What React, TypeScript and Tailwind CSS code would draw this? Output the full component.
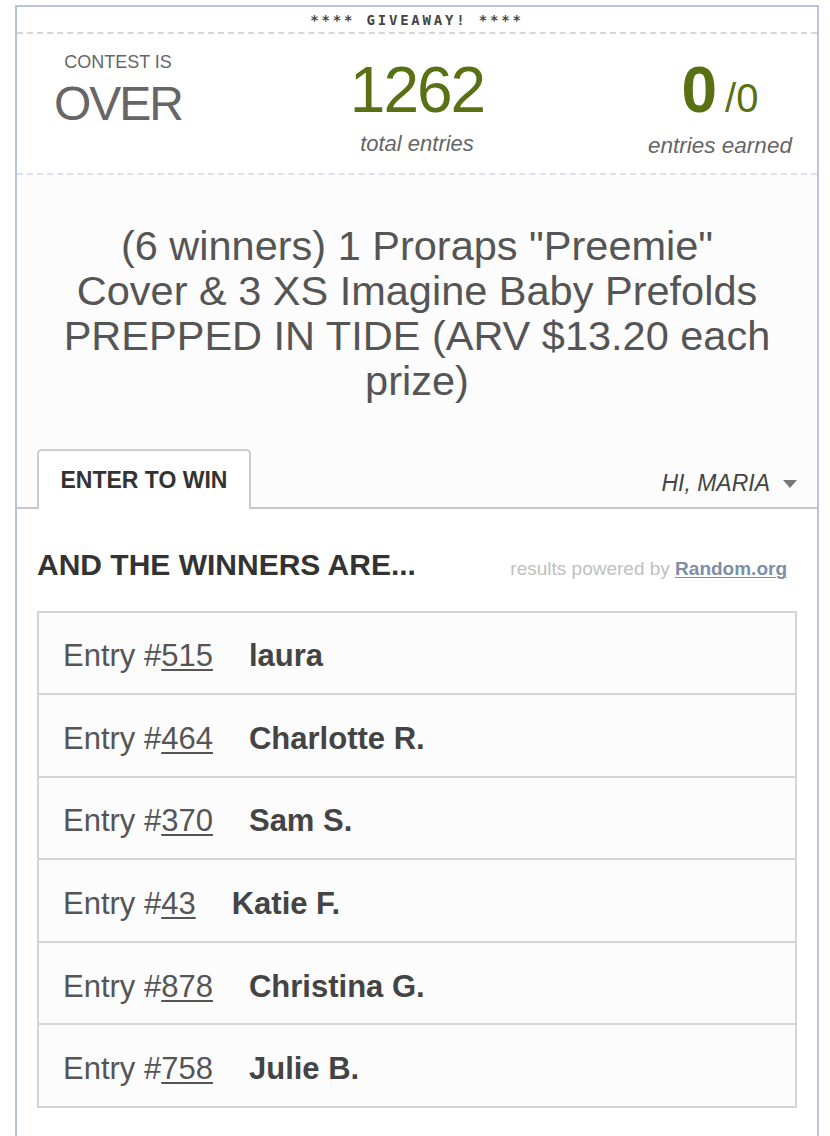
import React from "react";

const winners = [
  { entry: "515", name: "laura" },
  { entry: "464", name: "Charlotte R." },
  { entry: "370", name: "Sam S." },
  { entry: "43", name: "Katie F." },
  { entry: "878", name: "Christina G." },
  { entry: "758", name: "Julie B." },
];

const App = () => {
  return (
    <div
      className="h-[1136px] overflow-hidden bg-white pt-[5px]"
      style={{ fontFamily: '"Liberation Sans", Arial, sans-serif' }}
    >
      <div className="ml-[15px] w-[804px] min-h-[1200px] border-x-2 border-t-2 border-[#b8c4dc] bg-white">
        {/* giveaway banner */}
        <div className="flex h-[27px] items-center justify-center border-b-2 border-dashed border-[#d6d6d6]">
          <span
            className="text-[14px] font-bold leading-none tracking-[2.8px] text-[#444]"
            style={{ fontFamily: '"DejaVu Sans Mono", monospace' }}
          >
            **** GIVEAWAY! ****
          </span>
        </div>

        {/* stats */}
        <div className="grid h-[141px] grid-cols-[202px_396px_1fr] border-b-2 border-dashed border-[#dde0ec]">
          <div className="flex flex-col items-center pt-[18px] text-[#666]">
            <div className="text-[18px] leading-[20px]">CONTEST IS</div>
            <div className="mt-[8px] text-[48px] leading-[48px] tracking-[-2px]">OVER</div>
          </div>
          <div className="flex flex-col items-center pt-[24px]">
            <div className="text-[64px] leading-[64px] tracking-[-2px] text-[#5a7015]">1262</div>
            <div className="mt-[9px] text-[22px] italic leading-[26px] text-[#666]">total entries</div>
          </div>
          <div className="flex flex-col items-center pl-2 pt-[24px]">
            <div className="flex h-[64px] items-baseline leading-[64px] text-[#5a7015]">
              <span className="text-[64px] font-bold">0</span>
              <span className="ml-[8px] text-[40px]">/0</span>
            </div>
            <div className="mt-[11px] text-[22.5px] italic leading-[26px] text-[#666]">entries earned</div>
          </div>
        </div>

        {/* prize title + tabs */}
        <div className="bg-[#fcfcfc]">
          <h1 className="pt-[48px] text-center text-[41.5px] leading-[45px] text-[#555]">
            (6 winners) 1 Proraps "Preemie"
            <br />
            Cover &amp; 3 XS Imagine Baby Prefolds
            <br />
            PREPPED IN TIDE (ARV $13.20 each
            <br />
            prize)
          </h1>

          <div className="mt-[46px] flex items-end justify-between border-b-2 border-[#c8c8c8]">
            <div className="-mb-[2px] ml-[20px] w-[214px] rounded-t-[5px] border-x-2 border-t-2 border-[#cccccc] bg-white pb-[17px] pt-[18px] text-center text-[23px] font-bold leading-[23px] text-[#333]">
              ENTER TO WIN
            </div>
            <div className="flex items-center pb-[12px] pr-[20px]">
              <span className="text-[23px] italic leading-[23px] text-[#444]">HI, MARIA</span>
              <svg width="14" height="8" viewBox="0 0 14 8" className="ml-[13px]">
                <path d="M0 0 L14 0 L7 8 Z" fill="#777" />
              </svg>
            </div>
          </div>
        </div>

        {/* winners */}
        <div className="px-[20px] pt-[40px]">
          <div className="flex items-baseline justify-between">
            <h2 className="text-[30px] font-bold leading-[32px] text-[#333]">AND THE WINNERS ARE...</h2>
            <p className="mr-[10px] text-[19px] text-[#c0c0c0]">
              results powered by{" "}
              <span className="font-bold text-[#7d8ea8] underline decoration-1 underline-offset-2">Random.org</span>
            </p>
          </div>

          <div className="mt-[27px] border-2 border-[#d4d4d4] bg-[#fcfcfc]">
            {winners.map((w, i) => (
              <div
                key={i}
                className={`flex items-center pl-[24px] pt-[7px] text-[31px] leading-[36px] ${
                  i > 0 ? "h-[82.6px] border-t-2 border-[#d4d4d4]" : "h-[80.6px]"
                }`}
              >
                <span className="text-[#555]">
                  Entry #<span className="underline decoration-2 underline-offset-[3px]">{w.entry}</span>
                </span>
                <span className="ml-[36px] font-bold text-[#444]">{w.name}</span>
              </div>
            ))}
          </div>
        </div>
      </div>
    </div>
  );
};

export default App;
